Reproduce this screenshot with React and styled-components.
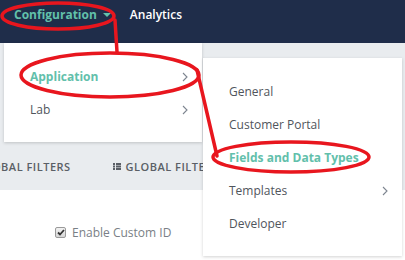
import React from "react"
import styled, { createGlobalStyle } from "styled-components"

const GlobalStyle = createGlobalStyle`
  html, body {
    margin: 0;
    padding: 0;
    background: #fff;
  }
  body {
    font-family: "Open Sans", "Liberation Sans", sans-serif;
  }
`

const Page = styled.div`
  position: relative;
  width: 405px;
  height: 260px;
  overflow: hidden;
`

const Navbar = styled.div`
  display: flex;
  align-items: center;
  height: 43px;
  padding-left: 14px;
  padding-bottom: 14px;
  box-sizing: border-box;
  background: #1f2d4a;
  gap: 19px;
`

const NavItem = styled.div`
  display: flex;
  align-items: center;
  gap: 6px;
  font-size: 12px;
  font-weight: ${p => (p.active ? 700 : 600)};
  color: ${p => (p.active ? "#62c0ab" : "#ffffff")};
`

const Caret = styled.span`
  width: 0;
  height: 0;
  border-left: 4px solid transparent;
  border-right: 4px solid transparent;
  border-top: 4px solid #62c0ab;
  margin-top: 1px;
`

const Header = styled.div`
  height: 147px;
  background: #e9ecef;
  display: flex;
  flex-direction: column;
  justify-content: flex-end;
`

const Tabs = styled.div`
  display: flex;
  align-items: center;
  height: 48px;
  margin-left: -23px;
  gap: 42px;
`

const Tab = styled.div`
  display: flex;
  align-items: center;
  gap: 5px;
  font-size: 11px;
  font-weight: 600;
  letter-spacing: 0.5px;
  color: #5a5f66;
  white-space: nowrap;
`

const Body = styled.div`
  padding: 34px 0 0 55px;
`

const CheckRow = styled.label`
  display: flex;
  align-items: center;
  gap: 6px;
  font-size: 12px;
  color: #7a7f86;
`

const CheckBox = styled.span`
  display: flex;
  align-items: center;
  justify-content: center;
  width: 11px;
  height: 11px;
  box-sizing: border-box;
  border: 1px solid #9a9a9a;
  border-radius: 2px;
  background: linear-gradient(#f2f2f2, #d6d6d6);
`

const Menu = styled.div`
  position: absolute;
  top: ${p => p.top}px;
  left: ${p => p.left}px;
  width: ${p => p.width}px;
  height: ${p => p.height}px;
  background: #fff;
  box-shadow: 0 1px 3px rgba(0, 0, 0, 0.18);
  box-sizing: border-box;
  padding-top: ${p => p.padTop}px;
  display: flex;
  flex-direction: column;
`

const MenuItem = styled.div`
  display: flex;
  align-items: center;
  justify-content: space-between;
  height: 33px;
  padding-left: 26px;
  padding-right: 14px;
  font-size: 12px;
  font-weight: ${p => (p.active ? 700 : 400)};
  color: ${p => (p.active ? "#62c0ab" : "#50555c")};
  white-space: nowrap;
`

const Overlay = styled.svg`
  position: absolute;
  top: 0;
  left: 0;
  pointer-events: none;
`

const Chevron = ({ color = "#7d8590" }) => (
  <svg width="6" height="10" viewBox="0 0 6 10">
    <polyline points="1,1 5,5 1,9" fill="none" stroke={color} strokeWidth="1.1" />
  </svg>
)

const ListIcon = () => (
  <svg width="8" height="7" viewBox="0 0 8 7">
    <rect x="0" y="0" width="2" height="2" fill="#5a5f66" />
    <rect x="0" y="2.5" width="2" height="2" fill="#5a5f66" />
    <rect x="0" y="5" width="2" height="2" fill="#5a5f66" />
    <rect x="3" y="0" width="5" height="2" fill="#5a5f66" />
    <rect x="3" y="2.5" width="5" height="2" fill="#5a5f66" />
    <rect x="3" y="5" width="5" height="2" fill="#5a5f66" />
  </svg>
)

const leftItems = [
  { label: "Application", active: true, sub: true },
  { label: "Lab", sub: true },
]

const rightItems = [
  { label: "General" },
  { label: "Customer Portal" },
  { label: "Fields and Data Types", active: true },
  { label: "Templates", sub: true },
  { label: "Developer" },
]

export default function App() {
  return (
    <Page>
      <GlobalStyle />
      <Navbar>
        <NavItem active>
          Configuration <Caret />
        </NavItem>
        <NavItem>Analytics</NavItem>
      </Navbar>

      <Header>
        <Tabs>
          <Tab>GLOBAL FILTERS</Tab>
          <Tab>
            <ListIcon /> GLOBAL FILTERS
          </Tab>
        </Tabs>
      </Header>

      <Body>
        <CheckRow>
          <CheckBox>
            <svg width="8" height="7" viewBox="0 0 8 7">
              <polyline points="1,3.5 3,5.5 7,1" fill="none" stroke="#333" strokeWidth="1.8" />
            </svg>
          </CheckBox>
          Enable Custom ID
        </CheckRow>
      </Body>

      <Menu top={43} left={4} width={198} height={99} padTop={17}>
        {leftItems.map(item => (
          <MenuItem key={item.label} active={item.active}>
            {item.label}
            {item.sub && <Chevron />}
          </MenuItem>
        ))}
      </Menu>

      <Menu top={58} left={203} width={199} height={198} padTop={17}>
        {rightItems.map(item => (
          <MenuItem key={item.label} active={item.active}>
            {item.label}
            {item.sub && <Chevron />}
          </MenuItem>
        ))}
      </Menu>

      <Overlay width="405" height="260" viewBox="0 0 405 260">
        <g fill="none" stroke="#e8161e" strokeWidth="3.5" strokeLinecap="round">
          <ellipse cx="58" cy="16" rx="56" ry="13" />
          <path d="M115 20 L117 52" />
          <ellipse cx="110" cy="75" rx="89" ry="22" />
          <path d="M197 70 L217 156" />
          <ellipse cx="291" cy="157" rx="78" ry="15" />
        </g>
      </Overlay>
    </Page>
  )
}
